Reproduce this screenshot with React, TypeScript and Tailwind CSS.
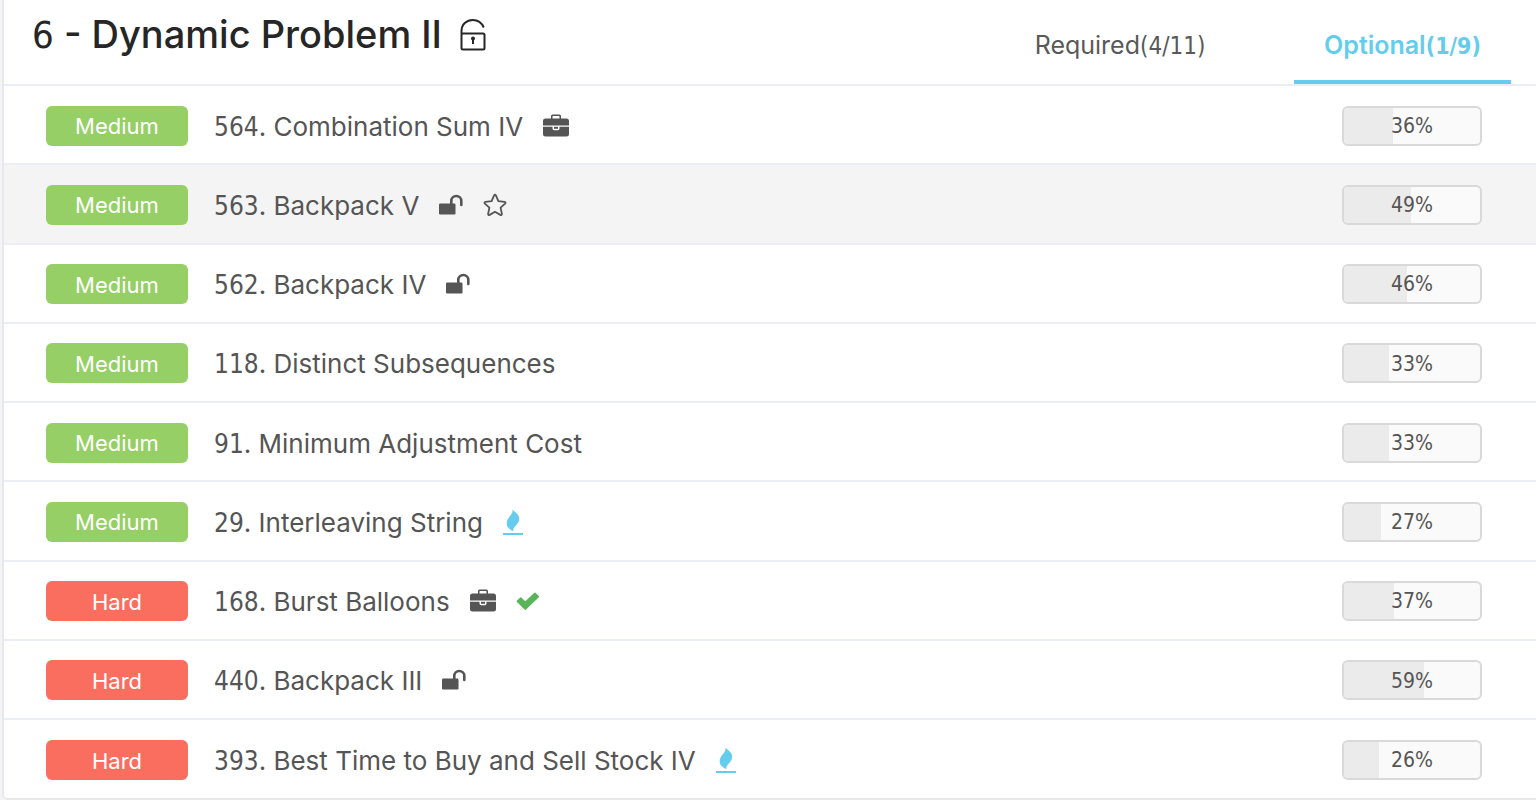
import React from "react";

type Mark = "case" | "unlock" | "star" | "fire" | "check";
type Problem = { id: number; title: string; level: "Medium" | "Hard"; rate: number; marks?: Mark[]; active?: boolean };

const problems: Problem[] = [
  { id: 564, title: "Combination Sum IV", level: "Medium", rate: 36, marks: ["case"] },
  { id: 563, title: "Backpack V", level: "Medium", rate: 49, marks: ["unlock", "star"], active: true },
  { id: 562, title: "Backpack IV", level: "Medium", rate: 46, marks: ["unlock"] },
  { id: 118, title: "Distinct Subsequences", level: "Medium", rate: 33 },
  { id: 91, title: "Minimum Adjustment Cost", level: "Medium", rate: 33 },
  { id: 29, title: "Interleaving String", level: "Medium", rate: 27, marks: ["fire"] },
  { id: 168, title: "Burst Balloons", level: "Hard", rate: 37, marks: ["case", "check"] },
  { id: 440, title: "Backpack III", level: "Hard", rate: 59, marks: ["unlock"] },
  { id: 393, title: "Best Time to Buy and Sell Stock IV", level: "Hard", rate: 26, marks: ["fire"] },
];

function OpenPadlock() {
  return (
    <svg className="h-8 w-[26px] shrink-0" viewBox="0 0 26 32" fill="none" stroke="#262626" strokeWidth="2" aria-hidden="true">
      <rect x="1.500" y="14.500" width="23" height="16" rx="1.500" />
      <path d="M1.500 15v-3C1.500 5.500 6.500 1 12.800 1 18 1 21.800 4 23.800 8.500" />
      <circle cx="13" cy="19.500" r="2" fill="#262626" stroke="none" />
      <path d="M13 19v6" />
    </svg>
  );
}

function MarkIcon({ mark }: { mark: Mark }) {
  switch (mark) {
    case "case":
      return (
        <svg className="h-6 w-[26px]" viewBox="0 0 26 24" fill="#555" aria-label="Interview question">
          <path d="M8 4.500V2Q8 .5 9.500 .5h7Q18 .5 18 2V4.500h5.500Q26 4.500 26 7V11.500H0V7Q0 4.500 2.500 4.500Zm1.500 0h7V2.500q0-.5-.5-.5h-6q-.5 0-.5.5Z" />
          <path d="M0 12.800h9.500v1.700q0 1.700 1.700 1.700h3.600q1.700 0 1.700-1.700v-1.700H26v7.200q0 2.500-2.500 2.500h-21Q0 22.500 0 20Z" />
          <path d="M11 12.800h4v2h-4Z" />
        </svg>
      );
    case "unlock":
      return (
        <svg className="h-6 w-6" viewBox="0 0 24 24" fill="none" aria-label="Unlocked">
          <rect x="0" y="10.500" width="16.500" height="11" rx="1.200" fill="#555" />
          <path d="M12.300 11.500V8a5 5 0 0 1 10 0V12" stroke="#555" strokeWidth="2.600" strokeLinecap="round" />
        </svg>
      );
    case "star":
      return (
        <svg className="h-6 w-6" viewBox="0 0 24 24" fill="none" stroke="#555" strokeWidth="1.800" strokeLinejoin="round" aria-label="Favourite">
          <path d="M11.100 2.400Q12 .8 12.900 2.400L15.400 8.200 21.600 8.900Q23.200 9.300 22.100 10.600L17.600 14.700 18.900 20.900Q18.900 22.500 17.300 21.900L12 18.800 6.700 21.900Q5.100 22.500 5.100 20.900L6.400 14.700 1.900 10.600Q.8 9.300 2.400 8.900L8.600 8.200Z" />
        </svg>
      );
    case "fire":
      return (
        <svg className="h-[26px] w-5" viewBox="0 0 20 26" fill="#64cdee" aria-label="Popular">
          <path d="M9.300 .5C11 6 3.700 7.500 3.700 14.500c0 4 3 5.700 6.600 7.700C9.500 17 16.200 16 16.200 9.700 16.200 5 12 3.500 9.300 .5Z" />
          <rect x="0" y="24" width="20" height="2" />
        </svg>
      );
    case "check":
      return (
        <svg className="h-6 w-6" viewBox="0 0 24 24" fill="#59b55a" stroke="#59b55a" strokeWidth="1.500" strokeLinejoin="round" aria-label="Solved">
          <path d="M1.300 12.300 4.700 9 9.300 13.400 18.900 4.200 22.300 7.600 9.300 20.200Z" />
        </svg>
      );
  }
}

function Row({ problem }: { problem: Problem }) {
  const { id, title, level, rate, marks = [], active } = problem;
  return (
    <li className={"flex min-h-[78px] flex-1 items-center border-b-2 border-[#ebeef5] pt-0.5 pr-[54px] pl-[42px] last:border-b-0 " + (active ? "bg-[#f4f4f4]" : "bg-white")}>
      <span className={"flex h-10 w-[142px] shrink-0 items-center justify-center rounded-md pt-0.5 text-[22px] text-white " + (level === "Medium" ? "bg-[#95cf65]" : "bg-[#fa6e60]")}>
        {level}
      </span>
      <a href={"#problem-" + id} className="ml-[26px] whitespace-nowrap pt-0.5 text-[26px] leading-10 text-[#555]">
        <span className="font-['DejaVu_Sans_Condensed',sans-serif]">{id}</span>. {title}
      </a>
      <span className="ml-5 flex items-center gap-5">
        {marks.map((mark) => <MarkIcon key={mark} mark={mark} />)}
      </span>
      <div className="relative ml-auto flex h-10 w-[140px] shrink-0 items-center justify-center overflow-hidden rounded-md border-2 border-[#d9d9d9] bg-[#fafafa] pt-0.5">
        <div className="absolute inset-y-0 left-0 bg-[#ebebeb]" style={{ width: `${rate}%` }} />
        <span className="relative font-['DejaVu_Sans_Condensed',sans-serif] text-[21px] text-[#555]">{rate}%</span>
      </div>
    </li>
  );
}

export default function App() {
  return (
    <main className="flex min-h-screen flex-col bg-[#f4f4f8] pl-0.5 font-['Inter',sans-serif]">
      <section className="flex flex-1 flex-col overflow-hidden rounded-bl-md border-b-2 border-l-2 border-[#e8e8e8] bg-white">
        <header className="flex h-[86px] items-stretch justify-between border-b-2 border-[#ebeef5] pr-[25px] pl-7">
          <h1 className="flex items-center gap-[18px] pb-3.5 text-[38px] font-medium whitespace-nowrap text-[#262626]">
            <span>
              <span className="font-['DejaVu_Sans_Condensed',sans-serif]">6</span> - Dynamic Problem II
            </span>
            <OpenPadlock />
          </h1>
          <nav className="flex gap-[60px] text-[25px]">
            <button type="button" className="flex w-[228px] items-center justify-center pt-2 text-[#595959]">
              Required<span className="font-['DejaVu_Sans_Condensed',sans-serif] text-[24px]">(4/11)</span>
            </button>
            <button type="button" className="flex w-[217px] items-center justify-center border-b-4 border-[#64cdee] pt-3 font-semibold text-[#64cdee]">
              Optional<span className="font-['DejaVu_Sans_Condensed',sans-serif] text-[23px] font-bold">(1/9)</span>
            </button>
          </nav>
        </header>
        <ul className="flex flex-1 flex-col">
          {problems.map((problem) => <Row key={problem.id} problem={problem} />)}
        </ul>
      </section>
    </main>
  );
}
